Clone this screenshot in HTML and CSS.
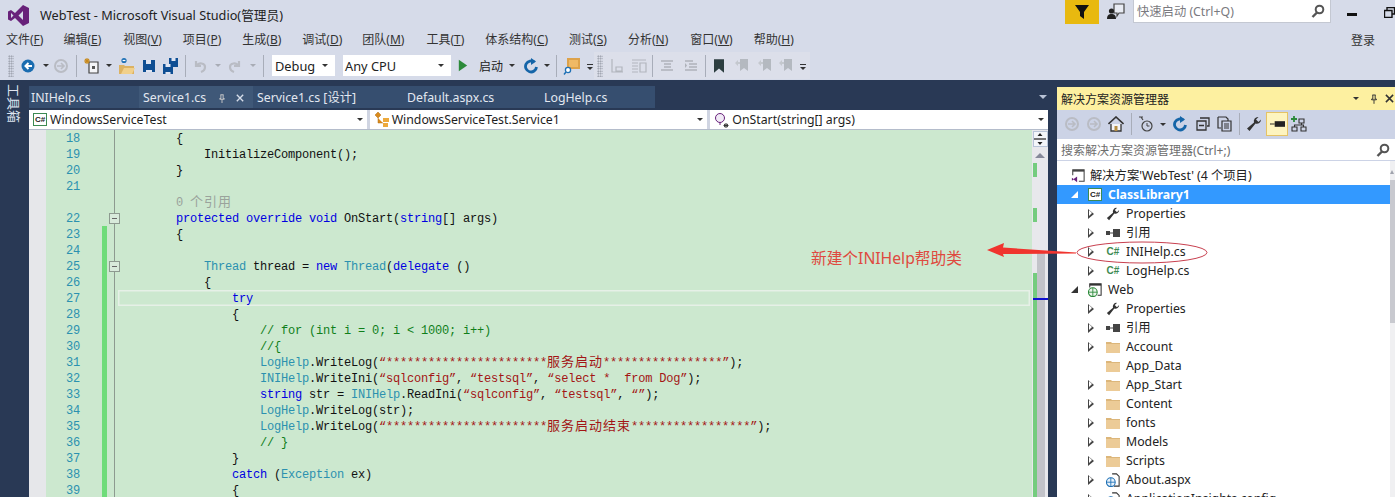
FILE: index.html
```html
<!DOCTYPE html>
<html lang="zh">
<head>
<meta charset="utf-8">
<title>WebTest - Microsoft Visual Studio</title>
<link rel="stylesheet" href="styles.css">
</head>
<body>
<svg class="sprite" xmlns="http://www.w3.org/2000/svg">
  <symbol id="i-back" viewBox="0 0 16 16"><circle cx="8" cy="8" r="6.5" fill="currentColor"/><path d="M12 8H6M8.500 5 5.500 8l3 3" fill="none" stroke="#fff" stroke-width="2"/></symbol>
  <symbol id="i-fwd" viewBox="0 0 16 16"><circle cx="8" cy="8" r="6" fill="none" stroke="currentColor" stroke-width="2"/><path d="M4 8h6M8 5l3 3-3 3" fill="none" stroke="currentColor" stroke-width="1.6"/></symbol>
  <symbol id="i-new" viewBox="0 0 16 16"><path d="M5 4h9v11H5z" fill="#f4f5f8" stroke="#444" stroke-width="1.2"/><path d="M8 8h3v3H8z" fill="#555"/><path d="M3 0v6M0 3h6M1 1l4 4M5 1 1 5" stroke="#c98a1c" stroke-width="1.1"/></symbol>
  <symbol id="i-open" viewBox="0 0 18 18"><path d="M1 8h5l1 1h9v8H1z" fill="#dcb262"/><path d="M3 17 6 11h11l-3 6z" fill="#f1d08b"/><circle cx="6" cy="3.5" r="2.6" fill="#1e70b5"/><path d="M4.600 3.500h2.800" stroke="#fff" stroke-width="1.2"/></symbol>
  <symbol id="i-save" viewBox="0 0 16 16"><path d="M2 2h12v12H2z" fill="#0e4e93"/><path d="M5 2h5v4H5z" fill="#dfe5f2"/><path d="M5 12h6v2H5z" fill="#dfe5f2"/></symbol>
  <symbol id="i-saveall" viewBox="0 0 18 18"><path d="M8 1h9v9H8z" fill="#0e4e93"/><path d="M10.500 1h4v3h-4z" fill="#dfe5f2"/><path d="M2 7h10v10H2z" fill="#0e4e93"/><path d="M4.500 7h5v3h-5z" fill="#dfe5f2"/><path d="M4.500 15h5v2h-5z" fill="#dfe5f2"/></symbol>
  <symbol id="i-undo" viewBox="0 0 16 16"><path d="M4 3v5h5M4.500 8C7 4 13 5 13 9c0 2-1 4-4 5" fill="none" stroke="currentColor" stroke-width="2.200"/></symbol>
  <symbol id="i-redo" viewBox="0 0 16 16"><path d="M12 3v5H7M11.500 8C9 4 3 5 3 9c0 2 1 4 4 5" fill="none" stroke="currentColor" stroke-width="2.200"/></symbol>
  <symbol id="i-play" viewBox="0 0 12 14"><path d="M1 0l10 7-10 7z" fill="#2c8a3a"/></symbol>
  <symbol id="i-refresh" viewBox="0 0 16 16"><path d="M11.500 4.200A5.500 5.500 0 1 0 13.500 9" fill="none" stroke="#1565a8" stroke-width="2.800"/><path d="M8 0v7l5-3.500z" fill="#1565a8"/></symbol>
  <symbol id="i-find" viewBox="0 0 18 18"><path d="M4 1h13v11H4z" fill="#dda24a"/><path d="M6 3h9v7H6z" fill="#efb965"/><circle cx="5" cy="13" r="2.600" fill="#fff" stroke="#1e70b5" stroke-width="1.300"/><path d="M3 15l-2 2.500" stroke="#1e70b5" stroke-width="1.500"/></symbol>
  <symbol id="i-ind" viewBox="0 0 16 16"><path d="M3 1v13h11M7 9h6v4H7z" fill="none" stroke="#b2b6bd" stroke-width="1.200"/></symbol>
  <symbol id="i-ind2" viewBox="0 0 16 16"><path d="M1 2h14M1 5h6M1 8h6M1 11h6M1 14h6M9 5h6v9H9z" fill="none" stroke="#b2b6bd" stroke-width="1.200"/></symbol>
  <symbol id="i-lines" viewBox="0 0 14 14"><path d="M1 2h12M4 5h7M4 8h7M1 11h12" stroke="#aeb2ba" stroke-width="1.300"/></symbol>
  <symbol id="i-lines2" viewBox="0 0 14 14"><path d="M1 2h8M5 5h8M5 8h8M1 11h12" stroke="#aeb2ba" stroke-width="1.300"/><path d="M1 4l2 2.500-2 2.500z" fill="#aeb2ba"/></symbol>
  <symbol id="i-mark" viewBox="0 0 12 16"><path d="M0 0h12v16L6 11 0 16z" fill="#2c3e40"/></symbol>
  <symbol id="i-mark2" viewBox="0 0 14 16"><path d="M5 1h8v12l-4-3-4 3z" fill="#b4b9c0"/><path d="M0 5l3-3v2h2v2H3v2z" fill="#c4c8ce"/></symbol>
  <symbol id="i-logo" viewBox="0 0 21 21"><path d="M15 0l6 3v15l-6 3-8-8-4 3-3-1.500v-8L3 5l4 3zM3 8v5l2.500-2.500zM15 6l-4.500 4.500L15 15z" fill="#68217a" fill-rule="evenodd"/></symbol>
  <symbol id="i-filter" viewBox="0 0 14 14"><path d="M0 0h14L9 7v7L5 11V7z" fill="#111"/></symbol>
  <symbol id="i-feedback" viewBox="0 0 18 18"><path d="M7 2h10v9H12l-2 3v-3H7z" fill="#e8ebf3" stroke="#444" stroke-width="1.200"/><circle cx="4.500" cy="9" r="2.600" fill="#222"/><path d="M0 17c0-4 2-5 4.500-5s4.500 1 4.500 5z" fill="#222"/></symbol>
  <symbol id="i-search" viewBox="0 0 14 14"><circle cx="8.500" cy="5.500" r="3.800" fill="none" stroke="#555" stroke-width="2"/><path d="M6 8.500 1.500 13" stroke="#555" stroke-width="2.400"/></symbol>
  <symbol id="i-restore" viewBox="0 0 11 11"><path d="M3 3V.5h7.500V7H8M.5 3.500H8V10.500H.5z" fill="none" stroke="#111" stroke-width="1.400"/></symbol>
  <symbol id="i-pin" viewBox="0 0 10 12"><path d="M3 1h4M3.500 1v5H2v1h6V6H6.500V1M5 7v5" fill="none" stroke="#333" stroke-width="1.200"/></symbol>
  <symbol id="i-x" viewBox="0 0 10 10"><path d="M1 1l8 8M9 1 1 9" stroke="currentColor" stroke-width="1.700"/></symbol>
  <symbol id="i-home" viewBox="0 0 16 16"><path d="M.5 8 8 1l7.500 7" fill="none" stroke="#333" stroke-width="1.600"/><path d="M3 8v7h10V8" fill="#f3f4f8" stroke="#333" stroke-width="1.300"/><path d="M6.500 10h3v5h-3z" fill="#b78f42"/></symbol>
  <symbol id="i-history" viewBox="0 0 16 16"><circle cx="9" cy="10" r="5" fill="none" stroke="#444" stroke-width="1.200"/><path d="M9 7v3h2.500" fill="none" stroke="#444"/><path d="M1 1h4M3 1l2 3" stroke="#444" stroke-width="1.200"/></symbol>
  <symbol id="i-collapse" viewBox="0 0 14 14"><path d="M4 1h9v8h-2M1 4h9v9H1zM3 8.500h5" fill="none" stroke="#333" stroke-width="1.300"/></symbol>
  <symbol id="i-copy" viewBox="0 0 16 16"><path d="M1 1h8l2 2v2M1 1v11h3" fill="none" stroke="#333" stroke-width="1.200"/><path d="M5 5h9v10H5zM7 8h5M7 10h5M7 12h5" fill="none" stroke="#333" stroke-width="1.200"/></symbol>
  <symbol id="i-wrench" viewBox="0 0 16 16"><path d="M15 3.500a4.200 4.200 0 0 1-5.500 4L3.500 15 1 12.500l7-6A4.200 4.200 0 0 1 12.500 1L10 3.500 12.500 6z" fill="#333"/></symbol>
  <symbol id="i-preview" viewBox="0 0 16 8"><path d="M0 3.500h5v1H0z" fill="#222"/><path d="M5 1h11v6H5z" fill="#222"/></symbol>
  <symbol id="i-diagram" viewBox="0 0 16 16"><path d="M3 0v6M0 3h6" stroke="#2c8a3a" stroke-width="1.800"/><path d="M8 3h5v4H8zM1 11h5v4H1zM10 11h5v4h-5zM10.500 7v2h-7v2M10.500 9h2v2" fill="none" stroke="#333" stroke-width="1.100"/></symbol>
  <symbol id="i-sln" viewBox="0 0 16 16"><path d="M2 7V1h13v13H9" fill="none" stroke="#444" stroke-width="1.200"/><path d="M2 1h13v2H2z" fill="#444"/><path d="M1 10l2 1.500L7 8.500V15l-4-3-2 1.500z" fill="#68217a"/></symbol>
  <symbol id="i-web" viewBox="0 0 16 16"><path d="M2 5V1h13v13h-4" fill="none" stroke="#333" stroke-width="1.200"/><path d="M2 1h13v2H2z" fill="#333"/><circle cx="5.500" cy="10.500" r="5" fill="#eaf5ea" stroke="#2c8a3a" stroke-width="1.200"/><path d="M.5 10.500h10M5.500 5.500v10" stroke="#2c8a3a"/></symbol>
  <symbol id="i-aspx" viewBox="0 0 16 16"><path d="M7 1h5l3 3v11H9" fill="none" stroke="#333" stroke-width="1.200"/><circle cx="5.500" cy="10.500" r="5" fill="#e8f2fb" stroke="#1e70b5" stroke-width="1.200"/><path d="M.5 10.500h10M5.500 5.500v10" stroke="#1e70b5"/></symbol>
  <symbol id="i-folder" viewBox="0 0 14 12"><path d="M0 1h5l1 1h8v10H0z" fill="#dcb67a"/><path d="M0 3h14v9H0z" fill="#eccb97"/></symbol>
  <symbol id="i-ref" viewBox="0 0 14 8"><path d="M0 2h4v4H0z" fill="#444"/><path d="M4 3.500h3v1H4z" fill="#444"/><path d="M7 0h7v8H7z" fill="#444"/></symbol>
  <symbol id="i-class" viewBox="0 0 16 16"><path d="M4 0l3 3-3 3-3-3zM4 6v5h5" fill="#d98a1c" stroke="#b06d10" stroke-width=".5"/><path d="M9 6h6v4H9zM9 11h5v4H9z" fill="#eda93c"/></symbol>
  <symbol id="i-method" viewBox="0 0 16 16"><circle cx="6" cy="6" r="4.500" fill="#f1eaf6" stroke="#68217a"/><path d="M6 10.500V13" stroke="#68217a"/><path d="M12 11v5M9.500 13.500h5M10 12l4 3M14 12l-4 3" stroke="#333"/></symbol>
  <symbol id="i-split" viewBox="0 0 12 12"><path d="M0 6h12" stroke="#222" stroke-width="1.200"/><path d="M6 0 3.500 3h5zM6 12 3.500 9h5z" fill="#222"/></symbol>
</svg>

<header class="chrome">
  <div class="titlebar">
    <svg class="logo"><use href="#i-logo"/></svg>
    <span class="apptitle">WebTest - Microsoft Visual Studio(管理员)</span>
    <div class="title-right">
      <span class="notify"><svg class="ic14"><use href="#i-filter"/></svg></span>
      <svg class="feedback"><use href="#i-feedback"/></svg>
      <div class="quick"><span>快速启动 (Ctrl+Q)</span><svg class="ic14"><use href="#i-search"/></svg></div>
      <span class="minimize"></span>
      <svg class="restore"><use href="#i-restore"/></svg>
    </div>
  </div>
  <div class="menubar">
    <nav class="menu">
      <span>文件(<u>F</u>)</span><span>编辑(<u>E</u>)</span><span>视图(<u>V</u>)</span><span>项目(<u>P</u>)</span><span>生成(<u>B</u>)</span><span>调试(<u>D</u>)</span><span>团队(<u>M</u>)</span><span>工具(<u>T</u>)</span><span>体系结构(<u>C</u>)</span><span>测试(<u>S</u>)</span><span>分析(<u>N</u>)</span><span>窗口(<u>W</u>)</span><span>帮助(<u>H</u>)</span>
    </nav>
    <span class="login">登录</span>
  </div>
  <div class="toolbar">
    <span class="grip"></span>
    <span class="slot w28 blue"><svg class="ic16"><use href="#i-back"/></svg></span>
    <span class="slot w7"><i class="caret"></i></span>
    <span class="slot w24 gray"><svg class="ic16"><use href="#i-fwd"/></svg></span>
    <span class="slot w6"><i class="sep"></i></span>
    <span class="slot w26"><svg class="ic16"><use href="#i-new"/></svg></span>
    <span class="slot w8"><i class="caret"></i></span>
    <span class="slot w28"><svg class="ic18"><use href="#i-open"/></svg></span>
    <span class="slot w16"><svg class="ic16"><use href="#i-save"/></svg></span>
    <span class="slot w25"><svg class="ic18"><use href="#i-saveall"/></svg></span>
    <span class="slot w6"><i class="sep"></i></span>
    <span class="slot w24 gray"><svg class="ic16"><use href="#i-undo"/></svg></span>
    <span class="slot w12"><i class="caret dim"></i></span>
    <span class="slot w22 gray"><svg class="ic16"><use href="#i-redo"/></svg></span>
    <span class="slot w14"><i class="caret dim"></i></span>
    <span class="slot w6"><i class="sep"></i></span>
    <span class="combo debug">Debug<i class="caret"></i></span>
    <span class="combo cpu">Any CPU<i class="caret"></i></span>
    <span class="slot w24"><svg class="play"><use href="#i-play"/></svg></span>
    <span class="start">启动</span>
    <span class="slot w18"><i class="caret"></i></span>
    <span class="slot w20"><svg class="ic16"><use href="#i-refresh"/></svg></span>
    <span class="slot w12"><i class="caret"></i></span>
    <span class="slot w6"><i class="sep"></i></span>
    <span class="slot w26"><svg class="ic18"><use href="#i-find"/></svg></span>
    <span class="slot w10"><i class="caret under"></i></span>
    <span class="group2">
      <span class="grip"></span>
      <span class="slot w21"><svg class="ic16"><use href="#i-ind"/></svg></span>
      <span class="slot w23"><svg class="ic16"><use href="#i-ind2"/></svg></span>
      <span class="slot w4"><i class="sep"></i></span>
      <span class="slot w26"><svg class="ic14"><use href="#i-lines"/></svg></span>
      <span class="slot w22"><svg class="ic14"><use href="#i-lines2"/></svg></span>
      <span class="slot w6"><i class="sep"></i></span>
      <span class="slot w22"><svg class="mark"><use href="#i-mark"/></svg></span>
      <span class="slot w24"><svg class="ic16"><use href="#i-mark2"/></svg></span>
      <span class="slot w22"><svg class="ic16"><use href="#i-mark2"/></svg></span>
      <span class="slot w20"><svg class="ic16"><use href="#i-mark2"/></svg></span>
      <span class="slot w14"><i class="caret under"></i></span>
    </span>
  </div>
</header>

<main class="workspace">
  <aside class="toolstrip"><span class="toolbox">工具箱</span></aside>

  <section class="editor">
    <div class="tabrow">
      <div class="tabs">
        <span class="tab t1">INIHelp.cs</span>
        <span class="tab t2 active">Service1.cs<svg class="tabpin"><use href="#i-pin"/></svg><svg class="tabx"><use href="#i-x"/></svg></span>
        <span class="tab t3">Service1.cs [设计]</span>
        <span class="tab t4">Default.aspx.cs</span>
        <span class="tab t5">LogHelp.cs</span>
      </div>
      <i class="caret light"></i>
    </div>
    <div class="navbar">
      <div class="drop"><span class="csbox">C#</span><span class="droptext">WindowsServiceTest</span><i class="caret"></i></div>
      <div class="drop"><svg class="ic16"><use href="#i-class"/></svg><span class="droptext">WindowsServiceTest.Service1</span><i class="caret"></i></div>
      <div class="drop"><svg class="ic16"><use href="#i-method"/></svg><span class="droptext">OnStart(string[] args)</span><i class="caret"></i></div>
    </div>
    <div class="codearea">
      <div class="lines">
        <div class="row"><span class="ln">18</span><span class="chg"></span><span class="fold"></span><code class="code">        {</code></div>
        <div class="row"><span class="ln">19</span><span class="chg"></span><span class="fold"></span><code class="code">            InitializeComponent();</code></div>
        <div class="row"><span class="ln">20</span><span class="chg"></span><span class="fold"></span><code class="code">        }</code></div>
        <div class="row"><span class="ln">21</span><span class="chg"></span><span class="fold"></span><code class="code"></code></div>
        <div class="row"><span class="ln"></span><span class="chg"></span><span class="fold"></span><code class="code lens">        0 <span class="cjk">个引用</span></code></div>
        <div class="row"><span class="ln">22</span><span class="chg"></span><span class="fold box"></span><code class="code">        <b>protected override void</b> OnStart(<b>string</b>[] args)</code></div>
        <div class="row"><span class="ln">23</span><span class="chg on"></span><span class="fold"></span><code class="code">        {</code></div>
        <div class="row"><span class="ln">24</span><span class="chg on"></span><span class="fold"></span><code class="code"></code></div>
        <div class="row"><span class="ln">25</span><span class="chg on"></span><span class="fold box"></span><code class="code">            <em>Thread</em> thread = <b>new</b> <em>Thread</em>(<b>delegate</b> ()</code></div>
        <div class="row"><span class="ln">26</span><span class="chg on"></span><span class="fold"></span><code class="code">            {</code></div>
        <div class="row"><span class="ln">27</span><span class="chg on"></span><span class="fold"></span><code class="code current">                <b>try</b></code></div>
        <div class="row"><span class="ln">28</span><span class="chg on"></span><span class="fold"></span><code class="code">                {</code></div>
        <div class="row"><span class="ln">29</span><span class="chg on"></span><span class="fold"></span><code class="code">                    <s>// for (int i = 0; i &lt; 1000; i++)</s></code></div>
        <div class="row"><span class="ln">30</span><span class="chg on"></span><span class="fold"></span><code class="code">                    <s>//{</s></code></div>
        <div class="row"><span class="ln">31</span><span class="chg on"></span><span class="fold"></span><code class="code">                    <em>LogHelp</em>.WriteLog(<q>“***********************<span class="cjk">服务启动</span>*****************”</q>);</code></div>
        <div class="row"><span class="ln">32</span><span class="chg on"></span><span class="fold"></span><code class="code">                    <em>INIHelp</em>.WriteIni(<q>“sqlconfig”</q>, <q>“testsql”</q>, <q>“select *  from Dog”</q>);</code></div>
        <div class="row"><span class="ln">33</span><span class="chg on"></span><span class="fold"></span><code class="code">                    <b>string</b> str = <em>INIHelp</em>.ReadIni(<q>“sqlconfig”</q>, <q>“testsql”</q>, <q>“”</q>);</code></div>
        <div class="row"><span class="ln">34</span><span class="chg on"></span><span class="fold"></span><code class="code">                    <em>LogHelp</em>.WriteLog(str);</code></div>
        <div class="row"><span class="ln">35</span><span class="chg on"></span><span class="fold"></span><code class="code">                    <em>LogHelp</em>.WriteLog(<q>“***********************<span class="cjk">服务启动结束</span>*****************”</q>);</code></div>
        <div class="row"><span class="ln">36</span><span class="chg on"></span><span class="fold"></span><code class="code">                    <s>// }</s></code></div>
        <div class="row"><span class="ln">37</span><span class="chg on"></span><span class="fold"></span><code class="code">                }</code></div>
        <div class="row"><span class="ln">38</span><span class="chg on"></span><span class="fold"></span><code class="code">                <b>catch</b> (<em>Exception</em> ex)</code></div>
        <div class="row"><span class="ln">39</span><span class="chg on"></span><span class="fold"></span><code class="code">                {</code></div>
      </div>
      <div class="vscroll">
        <span class="splitter"><svg class="ic12"><use href="#i-split"/></svg></span>
        <i class="uparrow"></i>
        <span class="thumb"></span>
        <span class="smark m1"></span><span class="smark m2"></span><span class="smark m3"></span>
        <span class="caretline"></span>
      </div>
    </div>
  </section>

  <section class="explorer">
    <div class="ex-title"><span>解决方案资源管理器</span><i class="caret"></i><svg class="expin"><use href="#i-pin"/></svg><svg class="exx"><use href="#i-x"/></svg></div>
    <div class="ex-tools">
      <span class="slot w22 gray ml"><svg class="ic16"><use href="#i-fwd"/></svg></span>
      <span class="slot w21 gray"><svg class="ic16"><use href="#i-fwd"/></svg></span>
      <span class="slot w24"><svg class="ic16"><use href="#i-home"/></svg></span>
      <span class="slot w6"><i class="sep"></i></span>
      <span class="slot w24"><svg class="ic16"><use href="#i-history"/></svg></span>
      <span class="slot w10"><i class="caret"></i></span>
      <span class="slot w24"><svg class="ic16"><use href="#i-refresh"/></svg></span>
      <span class="slot w22"><svg class="ic14"><use href="#i-collapse"/></svg></span>
      <span class="slot w22"><svg class="ic16"><use href="#i-copy"/></svg></span>
      <span class="slot w6"><i class="sep"></i></span>
      <span class="slot w24"><svg class="ic16"><use href="#i-wrench"/></svg></span>
      <span class="slot w22 pressed"><svg class="preview"><use href="#i-preview"/></svg></span>
      <span class="slot w22"><svg class="ic16"><use href="#i-diagram"/></svg></span>
    </div>
    <div class="ex-search"><span>搜索解决方案资源管理器(Ctrl+;)</span><svg class="ic14"><use href="#i-search"/></svg></div>
    <div class="tree">
      <div class="tr lv0"><svg class="ic14"><use href="#i-sln"/></svg><span>解决方案'WebTest' (4 个项目)</span></div>
      <div class="tr lv1 sel"><i class="tri open white"></i><span class="csbox">C#</span><span>ClassLibrary1</span></div>
      <div class="tr lv2"><i class="tri"></i><svg class="ic14"><use href="#i-wrench"/></svg><span>Properties</span></div>
      <div class="tr lv2"><i class="tri"></i><svg class="ref"><use href="#i-ref"/></svg><span>引用</span></div>
      <div class="tr lv2"><i class="tri"></i><span class="cs">C#</span><span>INIHelp.cs</span></div>
      <div class="tr lv2"><i class="tri"></i><span class="cs">C#</span><span>LogHelp.cs</span></div>
      <div class="tr lv1"><i class="tri open"></i><svg class="ic14"><use href="#i-web"/></svg><span>Web</span></div>
      <div class="tr lv2"><i class="tri"></i><svg class="ic14"><use href="#i-wrench"/></svg><span>Properties</span></div>
      <div class="tr lv2"><i class="tri"></i><svg class="ref"><use href="#i-ref"/></svg><span>引用</span></div>
      <div class="tr lv2"><i class="tri"></i><svg class="folder"><use href="#i-folder"/></svg><span>Account</span></div>
      <div class="tr lv2"><i class="tri none"></i><svg class="folder"><use href="#i-folder"/></svg><span>App_Data</span></div>
      <div class="tr lv2"><i class="tri"></i><svg class="folder"><use href="#i-folder"/></svg><span>App_Start</span></div>
      <div class="tr lv2"><i class="tri"></i><svg class="folder"><use href="#i-folder"/></svg><span>Content</span></div>
      <div class="tr lv2"><i class="tri"></i><svg class="folder"><use href="#i-folder"/></svg><span>fonts</span></div>
      <div class="tr lv2"><i class="tri"></i><svg class="folder"><use href="#i-folder"/></svg><span>Models</span></div>
      <div class="tr lv2"><i class="tri"></i><svg class="folder"><use href="#i-folder"/></svg><span>Scripts</span></div>
      <div class="tr lv2"><i class="tri"></i><svg class="ic14"><use href="#i-aspx"/></svg><span>About.aspx</span></div>
      <div class="tr lv2"><i class="tri"></i><svg class="ic14"><use href="#i-aspx"/></svg><span>ApplicationInsights.config</span></div>
    </div>
    <div class="ex-scroll"><i class="ex-up"></i><i class="ex-thumb"></i></div>
  </section>
</main>

<svg class="annot" viewBox="0 0 1395 497" xmlns="http://www.w3.org/2000/svg">
  <path d="M987 250 1004 243 1003 247.500 1076 252.500V253.500L1003 254 1004 257z" fill="#f0342e"/>
  <ellipse cx="1142" cy="252.500" rx="65" ry="10.500" fill="none" stroke="#c8404f" stroke-width="1"/>
</svg>
<span class="note">新建个INIHelp帮助类</span>
</body>
</html>
```
FILE: styles.css
```css
* { box-sizing: border-box; }
html, body { margin: 0; padding: 0; width: 1395px; height: 497px; overflow: hidden; }
body {
  position: relative;
  background: #d6dbe9;
  color: #1e1e1e;
  font-family: "Noto Sans", "Noto Sans CJK SC", sans-serif;
  font-size: 12px;
}
.sprite { display: none; }
svg { display: block; flex: none; }
.ic12 { width: 12px; height: 12px; }
.ic14 { width: 14px; height: 14px; }
.ic16 { width: 16px; height: 16px; }
.ic18 { width: 18px; height: 18px; }

/* chrome */
.chrome { height: 80px; display: flex; flex-direction: column; }
.titlebar { height: 29px; display: flex; align-items: flex-start; padding-left: 8px; }
.logo { width: 21px; height: 21px; margin-top: 5px; }
.apptitle { margin: 6px 0 0 11px; font-size: 12.700px; line-height: 18px; color: #222; }
.title-right { margin-left: auto; display: flex; align-items: flex-start; }
.notify { width: 34px; height: 24px; background: #e8b90f; display: flex; align-items: center; justify-content: center; }
.feedback { width: 18px; height: 18px; margin: 2px 8px 0; }
.quick {
  width: 198px; height: 23px; background: #fff; border: 1px solid #c4c8d2; border-top: 0;
  display: flex; align-items: center; justify-content: space-between; padding: 0 5px 0 3px; color: #7a7a80; font-size: 12.300px;
}
.minimize { width: 10px; height: 2.500px; background: #111; margin: 13px 0 0 16px; }
.restore { width: 11px; height: 11px; margin: 7px 0 0 27px; }

.menubar { height: 22px; display: flex; justify-content: space-between; align-items: center; padding: 0 20px 0 6px; }
.menu { display: flex; gap: 20px; line-height: 22px; color: #333; }
.menu span:nth-child(3) { margin-left: 2px; }
.menu span:nth-child(4), .menu span:nth-child(5), .menu span:nth-child(6), .menu span:nth-child(9),
.menu span:nth-child(10), .menu span:nth-child(11), .menu span:nth-child(13) { margin-left: 1px; }
.menu span:nth-child(8), .menu span:nth-child(12) { margin-left: 2px; }
.login { font-size: 12px; color: #333; }

.toolbar { height: 29px; display: flex; align-items: center; padding: 0 0 0 8px; color: #222; }
.grip {
  width: 6px; height: 22px; flex: none;
  background: radial-gradient(circle, #8f94a0 0.7px, transparent 1px) 0 0 / 2.500px 2.500px;
}
.group2 { display: flex; align-items: center; height: 27px; background: #dcdfea; margin-left: -1px; }
.group2 .grip { margin: 0 3px; }
.slot { display: flex; align-items: center; justify-content: center; flex: none; height: 24px; }
.w4 { width: 4px; } .w6 { width: 6px; } .w7 { width: 7px; } .w8 { width: 8px; } .w10 { width: 10px; }
.w12 { width: 12px; } .w14 { width: 14px; } .w16 { width: 16px; } .w18 { width: 18px; } .w20 { width: 20px; }
.w21 { width: 21px; } .w22 { width: 22px; } .w23 { width: 23px; } .w24 { width: 24px; } .w25 { width: 25px; }
.w26 { width: 26px; } .w28 { width: 28px; }
.blue { color: #1a6cb0; }
.gray { color: #b9bcc4; }
.sep { display: block; width: 1px; height: 22px; background: #a8adb9; }
.caret { display: block; flex: none; width: 0; height: 0; border-left: 3px solid transparent; border-right: 3px solid transparent; border-top: 3.500px solid #333; }
.caret.dim { border-top-color: #a8acb5; }
.caret.light { border-top-color: #b9c3d6; border-left-width: 4px; border-right-width: 4px; border-top-width: 4px; }
.caret.under { position: relative; margin-top: 6px; }
.caret.under::before { content: ""; position: absolute; top: -6px; left: -3px; width: 6px; height: 1px; background: #333; }
.combo {
  height: 21px; background: #fff; display: flex; align-items: center; justify-content: space-between;
  padding: 0 7px 0 2px; font-size: 12.800px; flex: none;
}
.debug { width: 63px; margin-left: 6px; padding-left: 3px; }
.cpu { width: 108px; margin-left: 8px; }
.play { width: 10px; height: 13px; }
.start { width: 24px; margin-left: 4px; flex: none; }
.mark { width: 10px; height: 14px; }

/* workspace */
.workspace { height: 417px; background: #293955; display: flex; overflow: hidden; }
.toolstrip { width: 29px; flex: none; padding: 4px 0 0 6px; }
.toolbox { writing-mode: vertical-rl; text-orientation: sideways; color: #dfe5f0; font-size: 13px; line-height: 15px; display: block; }

.editor { width: 1019px; flex: none; display: flex; flex-direction: column; padding-top: 6px; }
.tabrow { height: 22px; display: flex; justify-content: space-between; align-items: center; padding-right: 1px; flex: none; }
.tabs { width: 626px; height: 22px; background: #364e6f; display: flex; color: #e3e8f1; font-size: 12.300px; line-height: 22px; }
.tab { display: flex; align-items: center; flex: none; white-space: pre; padding-top: 2px; }
.t1 { width: 110px; padding-left: 2px; }
.t2 { width: 114px; padding-left: 4px; background: #3f5878; }
.t3 { width: 150px; padding-left: 4px; }
.t4 { width: 137px; padding-left: 4px; }
.t5 { width: 111px; padding-left: 4px; }
.tabpin { width: 8px; height: 9px; margin-left: 12px; filter: invert(1); }
.tabx { width: 8px; height: 8px; margin-left: 10px; color: #d7deea; }

.navbar { height: 20px; margin-top: 2px; flex: none; display: grid; grid-template-columns: 1fr 1fr 1fr; gap: 3px; border-bottom: 1px solid #b4bccb; background: #d0d5e2; }
.drop { background: #fff; display: flex; align-items: center; padding: 0 4px; font-size: 12.300px; color: #1e1e1e; min-width: 0; }
.drop .droptext { margin-left: 3px; flex: 1; white-space: nowrap; }
.drop svg { margin-right: -1px; }
.csbox {
  width: 14px; height: 13px; border: 1px solid #3d8a52; background: #fff; color: #222; flex: none;
  font: bold 8px/11px "Liberation Sans", sans-serif; text-align: center;
}

.codearea { flex: 1; display: flex; background: #cce8cf; min-height: 0; }
.lines { flex: 1; min-width: 0; overflow: hidden; background: linear-gradient(#e6e7ea, #e6e7ea) 0 0 / 17px 100% no-repeat; }
.row { display: flex; height: 16px; }
.ln { width: 34px; margin-left: 17px; text-align: right; font: 12px/18px "Liberation Mono", monospace; letter-spacing: -0.200px; color: #2b91af; flex: none; }
.chg { width: 5px; margin-left: 22px; flex: none; }
.chg.on { background: #6fdc7a; }
.fold { width: 11px; flex: none; position: relative; background: linear-gradient(#8d9a90, #8d9a90) 7px 0 / 1px 100% no-repeat; }
.fold.box::after {
  content: ""; position: absolute; left: 2px; top: 3px; width: 9px; height: 9px;
  border: 1px solid #8d9a90; background: linear-gradient(#666, #666) center / 5px 1px no-repeat #d8eadb;
}
.code {
  flex: 1; min-width: 0; white-space: pre; padding-left: 2px; height: 16px;
  font: 12px/18px "Liberation Mono", "Noto Sans CJK SC", monospace; letter-spacing: -0.200px; color: #111;
}
.code b { font-weight: normal; color: #0000e0; }
.code em { font-style: normal; color: #2b91af; }
.code s { text-decoration: none; color: #0f7f1a; }
.code q { quotes: none; color: #a31515; }
.code .cjk { font-family: "Noto Sans CJK SC", sans-serif; font-size: 13px; line-height: 0; letter-spacing: 1px; }
.lens { color: #9aa39c; }
.current { box-shadow: inset 0 0 0 1.500px #e6f0e7; margin-right: 2px; }

.vscroll { width: 16px; flex: none; background: #e8e8ec; position: relative; display: flex; flex-direction: column; align-items: center; }
.splitter { width: 15px; height: 16px; margin-top: 1px; background: #f4f6fa; border: 1px solid #b8c4d8; display: flex; align-items: center; justify-content: center; }
.uparrow { width: 0; height: 0; margin-top: 6px; border-left: 5px solid transparent; border-right: 5px solid transparent; border-bottom: 5px solid #868999; }
.thumb { position: absolute; left: 5px; top: 123px; bottom: 0; width: 8px; background: #c2c3c9; }
.smark { position: absolute; left: 1px; width: 4px; background: #74cc7e; }
.m1 { top: 33px; height: 14px; }
.m2 { top: 78px; height: 14px; }
.m3 { top: 143px; bottom: 0; }
.caretline { position: absolute; left: 1px; right: 0; top: 168px; height: 2px; background: #1010d0; }

/* explorer */
.explorer { width: 338px; flex: none; margin: 7px 0 0 9px; display: grid; grid-template-columns: 1fr 5px; grid-template-rows: 23px 28px 23px 1fr; background: #fff; min-height: 0; }
.ex-title { grid-column: 1 / 3; background: #fdf0a0; display: flex; align-items: center; padding: 0 0 0 4px; font-size: 12px; color: #222; }
.ex-title span { flex: 1; }
.expin { width: 8px; height: 10px; margin: 0 7px 0 11px; }
.exx { width: 9px; height: 9px; margin-right: 1px; color: #333; }
.ex-tools { grid-column: 1 / 3; background: #ccd3e6; display: flex; align-items: center; color: #222; }
.ml { margin-left: 4px; }
.pressed { background: #fdf4bf; border: 1px solid #e5c365; height: 24px; }
.preview { width: 15px; height: 8px; }
.ex-search { grid-column: 1 / 3; background: #fff; border-bottom: 1px solid #ccd3e6; border-top: 1px solid #ccd3e6; display: flex; align-items: center; justify-content: space-between; padding: 0 5px 0 4px; color: #6d6d6d; font-size: 12px; }
.tree { padding-top: 5px; overflow: hidden; min-height: 0; }
.tr { height: 19px; display: flex; align-items: center; font-size: 12.300px; line-height: 19px; color: #222; white-space: nowrap; }
.lv0 { padding-left: 14px; }
.lv0 span { margin-left: 5px; }
.lv1 { padding-left: 14px; }
.lv1 span:last-child { margin-left: 6px; }
.lv1 .tri { margin-right: 10px; }
.lv2 { padding-left: 31px; }
.lv2 .tri { margin-right: 12px; }
.lv2 svg, .lv2 .cs { margin-right: 6px; }
.tr.sel { background: #3399ff; color: #fff; font-weight: 700; }
.cs { width: 14px; flex: none; font: bold 10px/14px "Liberation Sans", sans-serif; color: #3d8a52; text-align: center; }
.tri { display: block; flex: none; width: 0; height: 0; border-left: 6px solid #444; border-top: 5.500px solid transparent; border-bottom: 5.500px solid transparent; position: relative; }
.tri:not(.open):not(.none)::after { content: ""; position: absolute; left: -5px; top: -3.500px; border-left: 3.500px solid #fff; border-top: 3.500px solid transparent; border-bottom: 3.500px solid transparent; }
.tri.none { border-color: transparent; }
.tri.open { border-left: 7px solid transparent; border-top: 0; border-bottom: 7px solid #333; width: 0; }
.tri.open.white { border-bottom-color: #fff; }
.ref { width: 14px; height: 8px; }
.folder { width: 14px; height: 12px; }
.ex-scroll { background: #f0f0f2; position: relative; }
.ex-up { position: absolute; left: 0; top: 9px; width: 0; height: 0; border-left: 2.500px solid transparent; border-right: 2.500px solid transparent; border-bottom: 4px solid #a0a3ad; }
.ex-thumb { position: absolute; left: 0; right: 0; top: 19px; height: 143px; background: #c8c9cf; display: block; }

/* annotation */
.annot { position: absolute; left: 0; top: 0; width: 1395px; height: 497px; pointer-events: none; }
.note { position: absolute; left: 811px; top: 248px; font-size: 15.700px; line-height: 20px; color: #df4a40; font-family: "Noto Sans", "Noto Sans CJK SC", sans-serif; }
```
